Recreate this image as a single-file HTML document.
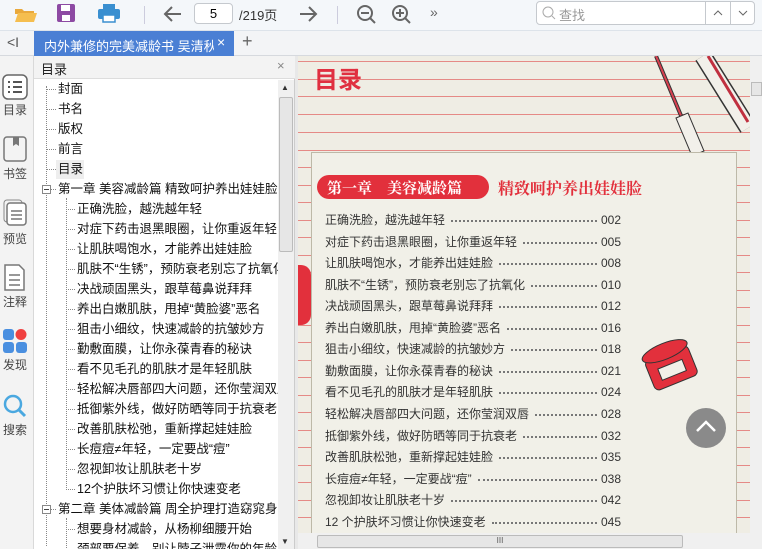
<!DOCTYPE html>
<html><head><meta charset="utf-8"><style>
*{margin:0;padding:0;box-sizing:border-box}
body{width:762px;height:549px;overflow:hidden;background:#fff;font-family:"Liberation Sans","Noto Sans CJK SC",sans-serif;position:relative}
.abs{position:absolute}
.tb{left:0;top:0;width:762px;height:31px;background:#f4f7fa;border-bottom:1px solid #dde3ea}
.tabbar{left:0;top:31px;width:762px;height:25px;background:#f3f4f6;border-bottom:1px solid #d6d9de}
.side{left:0;top:56px;width:34px;height:493px;background:#f3f3f3;border-right:1px solid #d9d9d9}
.side div{position:absolute;left:0;width:30px;text-align:center;font-size:12px;color:#444}
.toc{left:34px;top:56px;width:261px;height:493px;background:#fff;border-right:1px solid #ccc}
.tochd{left:34px;top:56px;width:261px;height:23px;background:#f3f3f3;border-bottom:1px solid #ddd;font-size:13px;color:#222;padding:3px 0 0 7px}
.item{position:absolute;font-size:12.5px;color:#111;white-space:nowrap;line-height:20px}
.l1{left:24px}.l2{left:43px}
.d::before{content:"";position:absolute;left:-11px;top:10px;width:9px;border-top:1px dotted #888}
.page{left:298px;top:56px;width:452px;height:477px;background:#efede4;overflow:hidden}
.line{position:absolute;left:0;width:452px;height:1px;background:#e58a86}
.box{left:311px;top:152px;width:426px;height:390px;background:#f1f0e8;border:1px solid #bdb9a8}
.row{position:absolute;left:325px;width:300px;display:flex;font-size:12px;color:#333;white-space:nowrap;line-height:16px}
.row .f{flex:1;margin:0 4px 0 6px;border-bottom:2px dotted #777;height:10px}
.row .n{width:24px}
</style></head><body>
<div class="abs tb"></div>
<svg class="abs" style="left:14px;top:4px" width="24" height="20"><path d="M1 5h7l2 2h10v3H1z" fill="#e9a93c"/><path d="M1 18l3-9h19l-3 9z" fill="#f5be4f"/></svg>
<svg class="abs" style="left:56px;top:3px" width="20" height="20"><rect x="1" y="1" width="18" height="18" rx="2" fill="#8d4aa3"/><rect x="5" y="2" width="9" height="6" fill="#fff"/><rect x="6" y="12" width="8" height="6" fill="#fff"/></svg>
<svg class="abs" style="left:97px;top:3px" width="24" height="20"><rect x="6" y="1" width="12" height="5" fill="#3a8fd0"/><rect x="1" y="6" width="22" height="10" rx="2" fill="#3a8fd0"/><rect x="6" y="12" width="12" height="7" fill="#fff" stroke="#3a8fd0" stroke-width="1.5"/></svg>
<div class="abs" style="left:144px;top:6px;width:1px;height:18px;background:#ccd"></div>
<svg class="abs" style="left:163px;top:5px" width="20" height="18"><path d="M18 9H3M9 2L2 9l7 7" stroke="#666" stroke-width="2" fill="none"/></svg>
<div class="abs" style="left:194px;top:3px;width:39px;height:21px;border:1px solid #c5c9ce;border-radius:4px;background:#fff;font-size:13px;text-align:center;line-height:19px">5</div>
<div class="abs" style="left:239px;top:5px;font-size:13px;color:#333">/219页</div>
<svg class="abs" style="left:298px;top:5px" width="20" height="18"><path d="M2 9h15M11 2l7 7-7 7" stroke="#666" stroke-width="2" fill="none"/></svg>
<div class="abs" style="left:337px;top:6px;width:1px;height:18px;background:#ccd"></div>
<svg class="abs" style="left:356px;top:4px" width="22" height="22"><circle cx="9" cy="9" r="7" stroke="#666" stroke-width="2" fill="none"/><path d="M5 9h8M14 14l5 5" stroke="#666" stroke-width="2"/></svg>
<svg class="abs" style="left:391px;top:4px" width="22" height="22"><circle cx="9" cy="9" r="7" stroke="#666" stroke-width="2" fill="none"/><path d="M5 9h8M9 5v8M14 14l5 5" stroke="#666" stroke-width="2"/></svg>
<div class="abs" style="left:430px;top:4px;font-size:14px;color:#666">»</div>
<div class="abs" style="left:536px;top:1px;width:219px;height:24px;border:1px solid #c5c9ce;border-radius:4px;background:#fff"></div>
<svg class="abs" style="left:542px;top:6px" width="14" height="14"><circle cx="6" cy="6" r="5" stroke="#aaa" fill="none"/><path d="M10 10l3 3" stroke="#aaa"/></svg>
<div class="abs" style="left:559px;top:5px;font-size:13px;color:#999">查找</div>
<div class="abs" style="left:705px;top:1px;width:1px;height:24px;background:#c5c9ce"></div>
<div class="abs" style="left:730px;top:1px;width:1px;height:24px;background:#c5c9ce"></div>
<svg class="abs" style="left:712px;top:9px" width="12" height="8"><path d="M2 6l4-4 4 4" stroke="#666" fill="none"/></svg>
<svg class="abs" style="left:737px;top:9px" width="12" height="8"><path d="M2 2l4 4 4-4" stroke="#666" fill="none"/></svg>

<div class="abs tabbar"></div>
<div class="abs" style="left:7px;top:34px;font-size:14px;color:#555">&lt;I</div>
<div class="abs" style="left:34px;top:31px;width:200px;height:25px;background:#4a7fd4;overflow:hidden">
<div style="position:absolute;left:10px;top:5px;width:170px;overflow:hidden;white-space:nowrap;color:#fff;font-size:13px">内外兼修的完美减龄书 吴清秋[w</div>
<div style="position:absolute;left:183px;top:3px;color:#fff;font-size:14px">×</div></div>
<div class="abs" style="left:242px;top:31px;font-size:18px;color:#666">+</div>

<div class="abs side">
<svg style="position:absolute;left:2px;top:18px" width="26" height="26"><rect x="1" y="1" width="24" height="24" rx="5" fill="#fff" stroke="#666" stroke-width="1.5"/><path d="M6 8h2M11 8h9M6 13h2M11 13h9M6 18h2M11 18h9" stroke="#555" stroke-width="2"/></svg>
<div style="top:45px">目录</div>
<svg style="position:absolute;left:3px;top:80px" width="24" height="26"><rect x="1" y="1" width="22" height="24" rx="3" fill="none" stroke="#777" stroke-width="1.5"/><path d="M10 1v9l3-2 3 2V1" fill="#777"/></svg>
<div style="top:109px">书签</div>
<svg style="position:absolute;left:3px;top:143px" width="24" height="28"><rect x="1" y="1" width="18" height="22" rx="3" fill="none" stroke="#888"/><rect x="4" y="4" width="19" height="22" rx="3" fill="#fff" stroke="#777" stroke-width="1.5"/><path d="M8 12h11M8 16h11M8 20h11" stroke="#777" stroke-width="1.5"/></svg>
<div style="top:174px">预览</div>
<svg style="position:absolute;left:4px;top:207px" width="22" height="28"><path d="M1 2h14l5 5v20H1z" fill="#fff" stroke="#777" stroke-width="1.5"/><path d="M5 12h11M5 17h11M5 22h11" stroke="#777" stroke-width="1.5"/></svg>
<div style="top:237px">注释</div>
<svg style="position:absolute;left:2px;top:272px" width="26" height="26"><rect x="1" y="1" width="11" height="11" rx="3" fill="#4a8fe0"/><circle cx="19" cy="6.5" r="5.5" fill="#f04040"/><rect x="1" y="14" width="11" height="11" rx="3" fill="#4a8fe0"/><rect x="14" y="14" width="11" height="11" rx="3" fill="#4a8fe0"/></svg>
<div style="top:300px">发现</div>
<svg style="position:absolute;left:2px;top:337px" width="26" height="26"><circle cx="11" cy="11" r="8" stroke="#4aa8e0" stroke-width="2.5" fill="none"/><path d="M17 17l6 6" stroke="#4aa8e0" stroke-width="3"/></svg>
<div style="top:365px">搜索</div>
</div>

<div class="abs toc"></div>
<div class="abs tochd">目录<span style="position:absolute;left:243px;top:2px;color:#888">×</span></div>
<div class="abs" style="left:46px;top:86px;height:460px;border-left:1px dotted #888"></div>
<div class="abs" style="left:66px;top:198px;height:292px;border-left:1px dotted #888"></div>
<div class="abs" style="left:66px;top:518px;height:30px;border-left:1px dotted #888"></div>
<div class="abs" style="left:56px;top:160px;width:28px;height:19px;background:#eee"></div>
<div class="abs" style="left:34px;top:80px;width:244px;height:469px;overflow:hidden">
<div class="item l1 d" style="top:-1px">封面</div>
<div class="item l1 d" style="top:19px">书名</div>
<div class="item l1 d" style="top:39px">版权</div>
<div class="item l1 d" style="top:59px">前言</div>
<div class="item l1 d" style="top:79px">目录</div>
<div class="item l1 d" style="top:99px">第一章 美容减龄篇 精致呵护养出娃娃脸</div>
<div class="item l2 d" style="top:119px">正确洗脸，越洗越年轻</div>
<div class="item l2 d" style="top:139px">对症下药击退黑眼圈，让你重返年轻</div>
<div class="item l2 d" style="top:159px">让肌肤喝饱水，才能养出娃娃脸</div>
<div class="item l2 d" style="top:179px">肌肤不“生锈”，预防衰老别忘了抗氧化</div>
<div class="item l2 d" style="top:199px">决战顽固黑头，跟草莓鼻说拜拜</div>
<div class="item l2 d" style="top:219px">养出白嫩肌肤，甩掉“黄脸婆”恶名</div>
<div class="item l2 d" style="top:239px">狙击小细纹，快速减龄的抗皱妙方</div>
<div class="item l2 d" style="top:259px">勤敷面膜，让你永葆青春的秘诀</div>
<div class="item l2 d" style="top:279px">看不见毛孔的肌肤才是年轻肌肤</div>
<div class="item l2 d" style="top:299px">轻松解决唇部四大问题，还你莹润双唇</div>
<div class="item l2 d" style="top:319px">抵御紫外线，做好防晒等同于抗衰老</div>
<div class="item l2 d" style="top:339px">改善肌肤松弛，重新撑起娃娃脸</div>
<div class="item l2 d" style="top:359px">长痘痘≠年轻，一定要战“痘”</div>
<div class="item l2 d" style="top:379px">忽视卸妆让肌肤老十岁</div>
<div class="item l2 d" style="top:399px">12个护肤坏习惯让你快速变老</div>
<div class="item l1 d" style="top:419px">第二章 美体减龄篇 周全护理打造窈窕身姿</div>
<div class="item l2 d" style="top:439px">想要身材减龄，从杨柳细腰开始</div>
<div class="item l2 d" style="top:459px">颈部要保养，别让脖子泄露你的年龄</div>
</div>
<div class="abs" style="left:42px;top:185px;width:9px;height:9px;border:1px solid #888;background:#fff"><div style="position:absolute;left:1px;top:3px;width:5px;height:1px;background:#444"></div></div>
<div class="abs" style="left:42px;top:505px;width:9px;height:9px;border:1px solid #888;background:#fff"><div style="position:absolute;left:1px;top:3px;width:5px;height:1px;background:#444"></div></div>
<div class="abs" style="left:278px;top:80px;width:16px;height:469px;background:#f0f0f0"></div>
<div class="abs" style="left:279px;top:97px;width:14px;height:155px;background:#e6e6e6;border:1px solid #bbb;border-radius:2px"></div>
<div class="abs" style="left:281px;top:83px;font-size:8px;color:#333">▲</div>
<div class="abs" style="left:281px;top:537px;font-size:8px;color:#333">▼</div>
<div class="abs" style="left:295px;top:56px;width:3px;height:493px;background:#e8e8e8"></div>

<div class="abs page">
<div class="line" style="top:5px"></div><div class="line" style="top:23px"></div><div class="line" style="top:40px"></div><div class="line" style="top:58px"></div><div class="line" style="top:76px"></div><div class="line" style="top:94px"></div><div class="line" style="top:111px"></div><div class="line" style="top:129px"></div><div class="line" style="top:146px"></div><div class="line" style="top:164px"></div><div class="line" style="top:181px"></div><div class="line" style="top:199px"></div><div class="line" style="top:216px"></div><div class="line" style="top:234px"></div><div class="line" style="top:251px"></div><div class="line" style="top:269px"></div><div class="line" style="top:286px"></div><div class="line" style="top:304px"></div><div class="line" style="top:321px"></div><div class="line" style="top:339px"></div><div class="line" style="top:356px"></div><div class="line" style="top:374px"></div><div class="line" style="top:391px"></div><div class="line" style="top:409px"></div><div class="line" style="top:426px"></div><div class="line" style="top:444px"></div><div class="line" style="top:461px"></div>
<div style="position:absolute;left:16px;top:4px;font-size:24px;font-weight:bold;color:#e03040">目录</div>
<svg style="position:absolute;left:340px;top:0" width="112" height="100"><path d="M18 0l26 62" stroke="#333" stroke-width="4"/><path d="M18 0l26 62" stroke="#d84050" stroke-width="2"/><path d="M38 62l12-5 16 38-12 5z" fill="#f2f0ea" stroke="#333"/><path d="M65 0l45 72" stroke="#333" stroke-width="18"/><path d="M65 0l45 72" stroke="#f2f0ea" stroke-width="15"/><path d="M70 0l40 66" stroke="#c03040" stroke-width="3"/></svg>
</div>
<div class="abs box"></div>
<div class="abs" style="left:317px;top:175px;width:172px;height:24px;background:#e2303c;border-radius:12px;color:#fff;font-family:'Noto Serif CJK SC',serif;font-size:15px;font-weight:bold;padding:2px 0 0 10px;white-space:nowrap">第一章　美容减龄篇</div>
<div class="abs" style="left:498px;top:176px;color:#e2303c;font-family:'Noto Serif CJK SC',serif;font-size:16px;font-weight:bold;white-space:nowrap">精致呵护养出娃娃脸</div>
<div class="abs" style="left:298px;top:265px;width:13px;height:60px;background:#e2303c;border-radius:0 10px 10px 0"></div>
<svg class="abs" style="left:636px;top:334px" width="70" height="66"><g transform="rotate(-22 35 33)"><rect x="12" y="18" width="46" height="32" rx="5" fill="#e2303c" stroke="#333"/><rect x="22" y="30" width="26" height="12" fill="#f1f0e8" stroke="#333"/><ellipse cx="35" cy="16" rx="24" ry="8" fill="#e2303c" stroke="#333"/></g></svg>
<div class="row" style="top:212px"><span>正确洗脸，越洗越年轻</span><span class="f"></span><span class="n">002</span></div>
<div class="row" style="top:234px"><span>对症下药击退黑眼圈，让你重返年轻</span><span class="f"></span><span class="n">005</span></div>
<div class="row" style="top:255px"><span>让肌肤喝饱水，才能养出娃娃脸</span><span class="f"></span><span class="n">008</span></div>
<div class="row" style="top:277px"><span>肌肤不“生锈”，预防衰老别忘了抗氧化</span><span class="f"></span><span class="n">010</span></div>
<div class="row" style="top:298px"><span>决战顽固黑头，跟草莓鼻说拜拜</span><span class="f"></span><span class="n">012</span></div>
<div class="row" style="top:320px"><span>养出白嫩肌肤，甩掉“黄脸婆”恶名</span><span class="f"></span><span class="n">016</span></div>
<div class="row" style="top:341px"><span>狙击小细纹，快速减龄的抗皱妙方</span><span class="f"></span><span class="n">018</span></div>
<div class="row" style="top:363px"><span>勤敷面膜，让你永葆青春的秘诀</span><span class="f"></span><span class="n">021</span></div>
<div class="row" style="top:384px"><span>看不见毛孔的肌肤才是年轻肌肤</span><span class="f"></span><span class="n">024</span></div>
<div class="row" style="top:406px"><span>轻松解决唇部四大问题，还你莹润双唇</span><span class="f"></span><span class="n">028</span></div>
<div class="row" style="top:428px"><span>抵御紫外线，做好防晒等同于抗衰老</span><span class="f"></span><span class="n">032</span></div>
<div class="row" style="top:449px"><span>改善肌肤松弛，重新撑起娃娃脸</span><span class="f"></span><span class="n">035</span></div>
<div class="row" style="top:471px"><span>长痘痘≠年轻，一定要战“痘”</span><span class="f"></span><span class="n">038</span></div>
<div class="row" style="top:492px"><span>忽视卸妆让肌肤老十岁</span><span class="f"></span><span class="n">042</span></div>
<div class="row" style="top:514px"><span>12 个护肤坏习惯让你快速变老</span><span class="f"></span><span class="n">045</span></div>
<div class="abs" style="left:686px;top:408px;width:40px;height:40px;border-radius:50%;background:#8a8a8a"></div>
<svg class="abs" style="left:694px;top:418px" width="24" height="16"><path d="M3 13l9-9 9 9" stroke="#fff" stroke-width="2.5" fill="none"/></svg>
<div class="abs" style="left:750px;top:56px;width:12px;height:493px;background:#f0f0f0"></div>
<div class="abs" style="left:751px;top:82px;width:11px;height:14px;background:#e6e6e6;border:1px solid #bbb"></div>
<div class="abs" style="left:298px;top:533px;width:452px;height:16px;background:#f0f0f0"></div>
<div class="abs" style="left:317px;top:535px;width:366px;height:13px;background:#e6e6e6;border:1px solid #bbb;border-radius:2px;font-size:8px;text-align:center;color:#555">III</div>
</body></html>
